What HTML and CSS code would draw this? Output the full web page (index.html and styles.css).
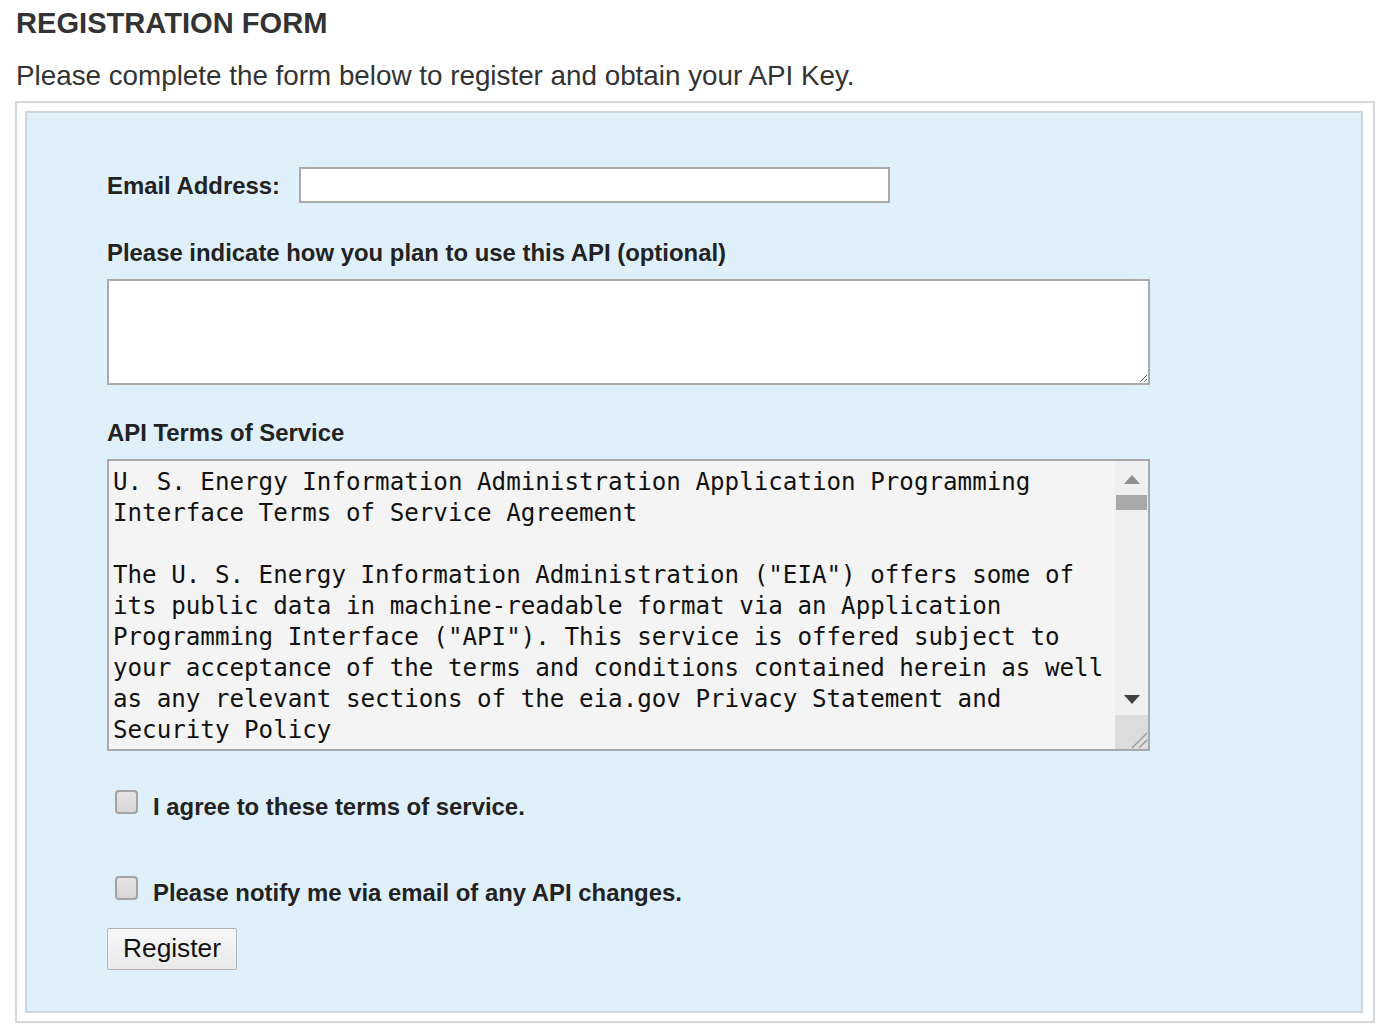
FILE: index.html
```html
<!DOCTYPE html>
<html lang="en">
<head>
<meta charset="utf-8">
<title>Registration Form</title>
<link rel="stylesheet" href="styles.css">
</head>
<body>
<h1 class="title">REGISTRATION FORM</h1>
<p class="intro">Please complete the form below to register and obtain your API Key.</p>
<div class="outer">
  <form class="panel">
    <div class="email-row">
      <label class="label email-label" for="email">Email Address:</label>
      <input class="email-input" id="email" type="text">
    </div>
    <label class="label block-label" for="usage">Please indicate how you plan to use this API (optional)</label>
    <textarea class="usage" id="usage"></textarea>
    <div class="label block-label terms-label">API Terms of Service</div>
    <div class="terms-wrap">
      <textarea class="terms" readonly>U. S. Energy Information Administration Application Programming Interface Terms of Service Agreement

The U. S. Energy Information Administration ("EIA") offers some of its public data in machine-readable format via an Application Programming Interface ("API"). This service is offered subject to your acceptance of the terms and conditions contained herein as well as any relevant sections of the eia.gov Privacy Statement and Security Policy</textarea>
      <div class="scrollbar">
        <div class="sb-up"><svg width="16" height="9" viewBox="0 0 16 9"><polygon points="8,0 16,9 0,9" fill="#8f8f8f"/></svg></div>
        <div class="sb-thumb"></div>
        <div class="sb-track"></div>
        <div class="sb-down"><svg width="16" height="9" viewBox="0 0 16 9"><polygon points="0,0 16,0 8,9" fill="#404040"/></svg></div>
        <div class="sb-corner"><svg width="22" height="22" viewBox="0 0 22 22"><line x1="6" y1="21" x2="21" y2="6" stroke="#9a9a9a" stroke-width="1.3"/><line x1="13" y1="21" x2="21" y2="13" stroke="#9a9a9a" stroke-width="1.3"/></svg></div>
      </div>
    </div>
    <div class="check-row first">
      <input class="check" type="checkbox" id="agree">
      <label class="label check-label" for="agree">I agree to these terms of service.</label>
    </div>
    <div class="check-row second">
      <input class="check" type="checkbox" id="notify">
      <label class="label check-label" for="notify">Please notify me via email of any API changes.</label>
    </div>
    <button class="register" type="button">Register</button>
  </form>
</div>
</body>
</html>
```

FILE: styles.css
```css
html, body {
  background: #ffffff;
}
body {
  margin: 0;
  padding: 6px 25px 0 15px;
  font-family: "Liberation Sans", Arial, sans-serif;
  color: #222222;
}
.title {
  margin: 0 0 0 1px;
  font-size: 29.1px;
  line-height: 34px;
  font-weight: bold;
  color: #333333;
}
.intro {
  margin: 20px 0 0 1px;
  font-size: 27.8px;
  line-height: 32px;
  color: #333333;
}
.outer {
  margin-top: 9px;
  border: 2px solid #d6d9db;
  padding: 8px 10px 8px 8px;
  background: #ffffff;
}
.panel {
  display: flex;
  flex-direction: column;
  align-items: flex-start;
  background: #dff0fa;
  border: 2px solid #cfd6da;
  padding: 54px 0 41px 80px;
}
.label {
  font-size: 23.9px;
  line-height: 28px;
  font-weight: bold;
  color: #222222;
}
.email-row {
  display: flex;
  align-items: center;
  height: 36px;
}
.email-label {
  width: 192px;
  padding-top: 2px;
}
.email-input {
  box-sizing: border-box;
  width: 591px;
  height: 36px;
  margin: 0;
  border: 2px solid #a9a9a9;
  background: #ffffff;
  outline: none;
}
.block-label {
  display: block;
  margin-top: 36px;
}
.terms-label {
  margin-top: 34px;
}
.usage {
  box-sizing: border-box;
  display: block;
  width: 1043px;
  height: 106px;
  margin: 12px 0 0 0;
  border: 2px solid #a9a9a9;
  background: #ffffff;
  resize: both;
}
.terms-wrap {
  position: relative;
  margin-top: 12px;
  width: 1043px;
  height: 292px;
}
.terms {
  box-sizing: border-box;
  display: block;
  width: 1043px;
  height: 292px;
  margin: 0;
  padding: 6px 40px 0 4px;
  border: 2px solid #a9a9a9;
  background: #f4f4f4;
  color: #111111;
  font-family: "DejaVu Sans Mono", monospace;
  font-size: 24.2px;
  line-height: 31px;
  overflow: hidden;
  resize: none;
  white-space: pre-wrap;
}
.scrollbar {
  position: absolute;
  top: 2px;
  right: 2px;
  bottom: 2px;
  width: 33px;
  display: flex;
  flex-direction: column;
  background: #f0f0f0;
}
.sb-up, .sb-down {
  display: flex;
  align-items: center;
  justify-content: center;
}
.sb-up {
  height: 34px;
  padding-top: 2px;
  box-sizing: border-box;
}
.sb-thumb {
  height: 15px;
  margin: 0 1px;
  background: #a8a8a8;
}
.sb-track {
  flex: 1;
}
.sb-down {
  height: 30px;
  padding-bottom: 2px;
  box-sizing: border-box;
}
.sb-corner {
  height: 34px;
  background: #dcdcdc;
  display: flex;
  align-items: flex-end;
  justify-content: flex-end;
}
.sb-corner svg {
  display: block;
}
.check-row {
  display: flex;
  align-items: flex-start;
  padding-left: 8px;
}
.check-row.first {
  margin-top: 39px;
}
.check-row.second {
  margin-top: 55px;
}
.check {
  -webkit-appearance: none;
  appearance: none;
  box-sizing: border-box;
  width: 23px;
  height: 24px;
  margin: 0 15px 0 0;
  border: 2px solid #a3a3a3;
  border-radius: 4px;
  background: linear-gradient(#e4e4e4, #d6d6d6);
}
.check-label {
  margin-top: 3px;
}
.register {
  margin-top: 21px;
  box-sizing: border-box;
  width: 130px;
  height: 42px;
  padding: 0 0 2px 0;
  border: 1px solid #b4b4b4;
  border-radius: 2px;
  background: linear-gradient(#f8f8f8, #e9e9e9);
  font-family: "Liberation Sans", Arial, sans-serif;
  font-size: 26.3px;
  color: #111111;
}
```
